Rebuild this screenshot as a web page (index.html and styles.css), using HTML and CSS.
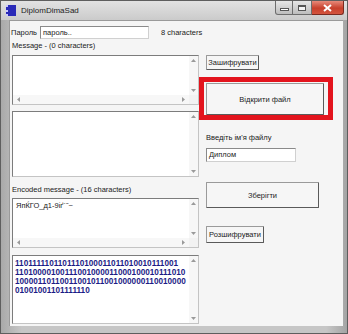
FILE: index.html
```html
<!DOCTYPE html>
<html lang="uk">
<head>
<meta charset="UTF-8">
<title>DiplomDimaSad</title>
<link rel="stylesheet" href="styles.css">
</head>
<body>
<div class="window">
    <div class="titlebar">
        <span class="app-icon"></span>
        <span class="title">DiplomDimaSad</span>
        <div class="controls">
            <span class="ctl min"><i></i></span>
            <span class="ctl max"><i></i></span>
            <span class="ctl close">
                <svg width="9" height="8" viewBox="0 0 9 8"><path d="M1 1 L8 7 M8 1 L1 7" stroke="#fff" stroke-width="2"/></svg>
            </span>
        </div>
    </div>
    <div class="client">
        <div class="pass-row">
            <label class="pass-label">Пароль</label>
            <div class="field pass-field">пароль..</div>
            <span class="count">8 characters</span>
        </div>
        <div class="main">
            <div class="left">
                <div class="caption first">Message - (0 characters)</div>
                <div class="memo memo1 hs">
                    <div class="text"></div>
                    <div class="vscroll">
                        <svg class="arr" width="5" height="3"><polygon points="0,3 5,3 2.5,0" fill="#9a9a9a"/></svg>
                        <svg class="arr" width="5" height="3"><polygon points="0,0 5,0 2.5,3" fill="#9a9a9a"/></svg>
                    </div>
                    <div class="hscroll">
                        <svg class="arr" width="3" height="5"><polygon points="3,0 3,5 0,2.5" fill="#9a9a9a"/></svg>
                        <svg class="arr" width="3" height="5"><polygon points="0,0 0,5 3,2.5" fill="#9a9a9a"/></svg>
                    </div>
                    <div class="corner"></div>
                </div>
                <div class="memo memo2">
                    <div class="text"></div>
                    <div class="vscroll">
                        <svg class="arr" width="5" height="3"><polygon points="0,3 5,3 2.5,0" fill="#9a9a9a"/></svg>
                        <svg class="arr" width="5" height="3"><polygon points="0,0 5,0 2.5,3" fill="#9a9a9a"/></svg>
                    </div>
                </div>
                <div class="caption encoded">Encoded message - (16 characters)</div>
                <div class="memo memo3 hs">
                    <div class="text">ЯпЌГО_д1-9іґ´˜~</div>
                    <div class="vscroll">
                        <svg class="arr" width="5" height="3"><polygon points="0,3 5,3 2.5,0" fill="#9a9a9a"/></svg>
                        <svg class="arr" width="5" height="3"><polygon points="0,0 5,0 2.5,3" fill="#9a9a9a"/></svg>
                    </div>
                    <div class="hscroll">
                        <svg class="arr" width="3" height="5"><polygon points="3,0 3,5 0,2.5" fill="#9a9a9a"/></svg>
                        <svg class="arr" width="3" height="5"><polygon points="0,0 0,5 3,2.5" fill="#9a9a9a"/></svg>
                    </div>
                    <div class="corner"></div>
                </div>
                <div class="memo memo4">
                    <div class="text binary">1101111101101110100011011010010111001<br>11010000100111001000011000100010111010<br>10000110110011001011001000000110010000<br>01001001101111110</div>
                    <div class="vscroll">
                        <svg class="arr" width="5" height="3"><polygon points="0,3 5,3 2.5,0" fill="#9a9a9a"/></svg>
                        <svg class="arr" width="5" height="3"><polygon points="0,0 5,0 2.5,3" fill="#9a9a9a"/></svg>
                    </div>
                </div>
            </div>
            <div class="right">
                <button class="btn btn-encrypt">Зашифрувати</button>
                <div class="highlight">
                    <button class="btn btn-open">Відкрити файл</button>
                </div>
                <div class="file-label">Введіть ім'я файлу</div>
                <div class="field file-field">Диплом</div>
                <button class="btn btn-save">Зберігти</button>
                <button class="btn btn-decrypt">Розшифрувати</button>
            </div>
        </div>
    </div>
</div>
</body>
</html>
```

FILE: styles.css
```css
* {
    box-sizing: border-box;
}
body {
    margin: 0;
    font-family: "Liberation Sans", Arial, sans-serif;
    font-size: 7.5px;
    color: #1a1a1a;
    background: #8f8f8f;
}
.window {
    width: 348px;
    height: 334px;
    display: flex;
    flex-direction: column;
    background: linear-gradient(90deg, #a9a9a9, #c6c6c6 6%, #c6c6c6 94%, #a4a4a4);
    border: 1px solid #5e5e5e;
    padding: 0 4px 7px 8px;
}
.titlebar {
    height: 19px;
    display: flex;
    align-items: flex-start;
    background: linear-gradient(#e2e2e2, #cbcbcb);
    margin: 0 -4px 0 -8px;
    padding-left: 5px;
}
.app-icon {
    width: 10px;
    height: 11px;
    margin-top: 4px;
    background: #2a2ab8;
    border-left: 2px dotted #c8c8ff;
}
.title {
    font-size: 8px;
    margin-left: 5px;
    margin-top: 5px;
    color: #222;
}
.controls {
    margin-left: auto;
    margin-right: 3px;
    display: flex;
}
.ctl {
    height: 14px;
    display: flex;
    align-items: center;
    justify-content: center;
    border: 1px solid #6d6d6d;
    border-top: none;
    background: linear-gradient(#e6e6e6, #bdbdbd);
}
.min {
    width: 18px;
    border-radius: 0 0 0 3px;
}
.min i {
    width: 7px;
    height: 1px;
    margin-top: 4px;
    background: #fff;
    border: 1px solid #555;
    box-sizing: content-box;
}
.max {
    width: 19px;
    border-left: none;
}
.max i {
    width: 8px;
    height: 6px;
    border: 1px solid #555;
    border-top-width: 2px;
    background: #f4f4f4;
}
.close {
    width: 32px;
    border-left: none;
    border-radius: 0 0 3px 0;
    background: linear-gradient(#e78a7a, #c7402c 55%, #d4543e);
    border-color: #7a2a20;
}
.client {
    flex: 1;
    background: #f5f5f5;
    border-top: 1px solid #9a9a9a;
    border-left: 1px solid #9a9a9a;
    padding-left: 1px;
}
.pass-row {
    display: flex;
    align-items: center;
    margin-top: 5px;
    height: 13px;
}
.pass-label {
    width: 29px;
}
.field {
    background: #fff;
    border: 1px solid #8a8a8a;
    border-right-color: #d0d0d0;
    border-bottom-color: #d0d0d0;
    padding: 1px 2px;
    line-height: 10px;
}
.pass-field {
    width: 109px;
    height: 13px;
}
.count {
    margin-left: 12px;
}
.main {
    display: flex;
}
.left {
    width: 188px;
    display: flex;
    flex-direction: column;
    padding-left: 1px;
}
.caption {
    height: 10px;
    line-height: 10px;
}
.caption.first {
    margin-top: 2px;
    margin-bottom: 4px;
}
.caption.encoded {
    margin-top: 8px;
    margin-bottom: 3px;
}
.memo {
    display: grid;
    grid-template-columns: 1fr 9px;
    grid-template-rows: 1fr;
    background: #fff;
    border: 1px solid #7c7c7c;
    border-right-color: #c4c4c4;
    border-bottom-color: #c4c4c4;
}
.memo.hs {
    grid-template-rows: 1fr 9px;
}
.memo1 {
    height: 50px;
}
.memo2 {
    height: 66px;
    margin-top: 6px;
}
.memo3 {
    height: 50px;
}
.memo4 {
    height: 69px;
    margin-top: 7px;
}
.text {
    padding: 2px 3px;
    line-height: 10px;
    overflow: hidden;
}
.binary {
    font-weight: bold;
    font-size: 8.2px;
    line-height: 9px;
    color: #1c1c86;
    padding: 3px 0 0 2px;
    white-space: nowrap;
}
.vscroll {
    background: #f7f7f7;
    display: flex;
    flex-direction: column;
    justify-content: space-between;
    align-items: center;
    padding: 3px 0;
}
.hscroll {
    background: #f7f7f7;
    display: flex;
    justify-content: space-between;
    align-items: center;
    padding: 0 4px;
}
.corner {
    background: #f2f2f2;
}
.arr {
    display: block;
}
.right {
    flex: 1;
    display: flex;
    flex-direction: column;
    align-items: flex-start;
}
.btn {
    font-family: "Liberation Sans", Arial, sans-serif;
    font-size: 7.5px;
    color: #1a1a1a;
    background: #f6f6f6;
    border: 1px solid #9a9a9a;
    border-right-color: #5a5a5a;
    border-bottom-color: #5a5a5a;
    border-radius: 1px;
    padding: 0;
    margin-left: 7px;
}
.btn-encrypt {
    margin-top: 16px;
    width: 53px;
    height: 15px;
}
.highlight {
    margin-top: 7px;
    width: 134px;
    height: 43px;
    border: 5px solid #e3141d;
    padding: 1px 0 0 2px;
}
.btn-open {
    margin: 0;
    width: 118px;
    height: 32px;
}
.file-label {
    margin-top: 13px;
    margin-left: 7px;
    height: 10px;
    line-height: 10px;
}
.file-field {
    margin-top: 5px;
    margin-left: 7px;
    width: 90px;
    height: 14px;
}
.btn-save {
    margin-top: 20px;
    width: 113px;
    height: 26px;
}
.btn-decrypt {
    margin-top: 18px;
    width: 58px;
    height: 17px;
}
```
